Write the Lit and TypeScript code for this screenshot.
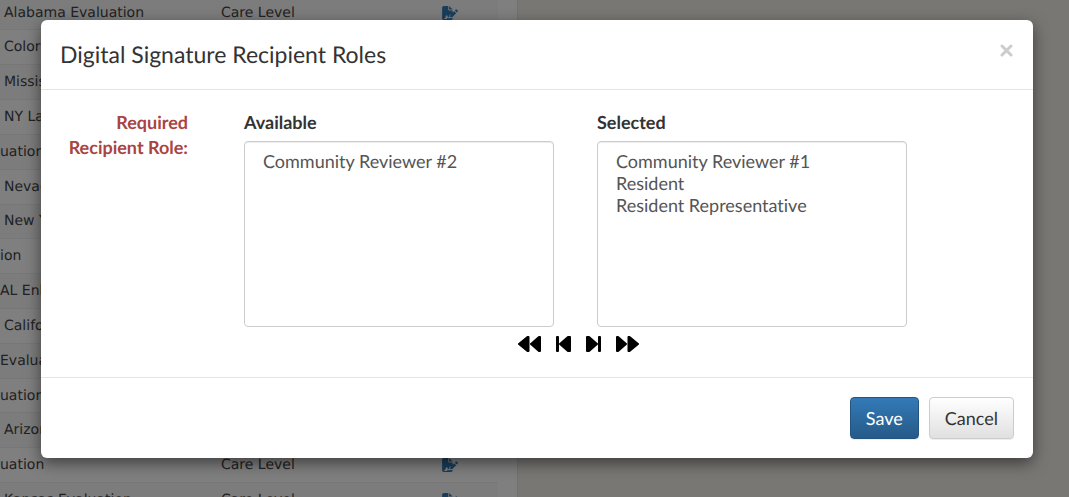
import { LitElement, html, css } from "lit";
import { customElement, property } from "lit/decorators.js";

interface Evaluation {
  name: string;
  level?: string;
  wrapped?: boolean;
}

const EVALUATIONS: Evaluation[] = [
  { name: "Alabama Evaluation", level: "Care Level" },
  { name: "Colorado" },
  { name: "Mississippi" },
  { name: "NY La" },
  { name: "uation", wrapped: true },
  { name: "Nevada" },
  { name: "New York" },
  { name: "ion", wrapped: true },
  { name: "AL Enh", wrapped: true },
  { name: "California" },
  { name: "Evaluation", wrapped: true },
  { name: "uation", wrapped: true },
  { name: "Arizona" },
  { name: "uation", level: "Care Level", wrapped: true },
  { name: "Kansas Evaluation", level: "Care Level" },
];

@customElement("evaluation-list")
export class EvaluationList extends LitElement {
  static styles = css`
    :host {
      display: block;
      overflow: hidden;
      background: #f2efe8;
    }
    .panel {
      box-sizing: border-box;
      width: 518px;
      padding-right: 19px;
      background: #fff;
      border-right: 1px solid #e4e2dc;
    }
    .table {
      width: 100%;
      height: 522px;
      margin-top: -4px;
      border-collapse: collapse;
      table-layout: fixed;
      font: 14px/20px "DejaVu Sans", sans-serif;
      color: #444;
    }
    .row {
      border-bottom: 1px solid #eee;
    }
    .row:nth-child(odd) {
      background: #f9f9f9;
    }
    .name {
      padding: 0 0 0 4px;
      white-space: nowrap;
    }
    .wrapped {
      padding-left: 0;
    }
    .level {
      width: 221px;
      padding: 0;
    }
    .action {
      width: 56px;
      padding: 0;
    }
    .sign {
      display: block;
      width: 16px;
      height: 14px;
      color: #337ab7;
    }
    .icon {
      display: block;
      width: 16px;
      height: 14px;
      fill: currentColor;
    }
  `;

  render() {
    return html`
      <div class="panel">
        <table class="table">
          <tbody>
            ${EVALUATIONS.map(
              (e) => html`<tr class="row">
                <td class="name ${e.wrapped ? "wrapped" : ""}">${e.name}</td>
                <td class="level">${e.level ?? ""}</td>
                <td class="action">
                  ${e.level
                    ? html`<a class="sign" href="#" aria-label="Edit signature roles">
                        <svg class="icon" viewBox="0 0 576 512" aria-hidden="true">
                          <path
                            d="M64 0C28.700 0 0 28.700 0 64v384c0 35.300 28.700 64 64 64h256c35.300 0 64-28.700 64-64v-19.200l-60 15c-10 3-22-1-30-8-8 8-18 12-30 12h-40c-8 0-16-5-20-13l-8-17-11 36c-4 12-14 20-27 20H80v-32h30l24-80c8-28 46-30 58-4l24 52 40-2 17-66c3-11 9-21 17-29L384 284V160H256c-18 0-32-14-32-32V0zM256 0v128h128zM550 139c-16-16-41-16-57 0l-29 29 71 71 29-29c16-16 16-41 0-57zM312 320c-4 4-7 9-8 15l-15 60c-3 11 8 22 19 19l60-15c6-1 11-4 15-8l130-130-71-71z"
                          />
                        </svg>
                      </a>`
                    : ""}
                </td>
              </tr>`,
            )}
          </tbody>
        </table>
      </div>
    `;
  }
}

@customElement("role-picker")
export class RolePicker extends LitElement {
  @property({ attribute: false }) available: string[] = [];
  @property({ attribute: false }) selected: string[] = [];

  static styles = css`
    :host {
      display: block;
    }
    .lists {
      display: grid;
      grid-template-columns: 1fr 1fr;
      column-gap: 43px;
    }
    .heading {
      display: block;
      font-weight: 700;
      line-height: 25px;
      color: #333;
      margin-bottom: 6px;
    }
    .list {
      box-sizing: border-box;
      display: block;
      width: 100%;
      height: 186px;
      padding: 8px 16px;
      border: 1px solid #ccc;
      border-radius: 4px;
      box-shadow: inset 0 1px 1px rgba(0, 0, 0, 0.075);
      background: #fff;
      font: inherit;
      text-rendering: inherit;
      color: #555;
      outline: none;
      overflow: auto;
    }
    .option {
      padding: 0 2px;
      min-height: 0;
      line-height: 22px;
    }
    .moves {
      display: flex;
      justify-content: center;
      gap: 15px;
      padding: 8px 0 0 6px;
    }
    .move {
      display: block;
      padding: 0;
      border: 0;
      background: none;
      color: #000;
    }
    .glyph {
      display: block;
      height: 18px;
      fill: currentColor;
      stroke: currentColor;
      stroke-width: 2;
      stroke-linejoin: round;
    }
  `;

  private list(id: string, title: string, roles: string[]) {
    return html`<div>
      <label class="heading" for=${id}>${title}</label>
      <select class="list" id=${id} multiple>
        ${roles.map((r) => html`<option class="option">${r}</option>`)}
      </select>
    </div>`;
  }

  render() {
    return html`
      <div class="lists">
        ${this.list("available", "Available", this.available)}
        ${this.list("selected", "Selected", this.selected)}
      </div>
      <div class="moves">
        <button class="move" type="button" aria-label="Remove all">
          <svg class="glyph" width="23" viewBox="0 0 23 18">
            <path d="M1 9 9.500 2h1v14h-1zM13 9l8-7h1v14h-1z" />
          </svg>
        </button>
        <button class="move" type="button" aria-label="Remove">
          <svg class="glyph" width="15" viewBox="0 0 15 18">
            <path d="M1 2h1v14H1zM4 9l8-7h2v14h-2z" />
          </svg>
        </button>
        <button class="move" type="button" aria-label="Add">
          <svg class="glyph" width="15" viewBox="0 0 15 18">
            <path d="M13 2h1v14h-1zM11 9 3 2H1v14h2z" />
          </svg>
        </button>
        <button class="move" type="button" aria-label="Add all">
          <svg class="glyph" width="23" viewBox="0 0 23 18">
            <path d="M10 9 2 2H1v14h1zM22 9l-8.500-7h-1v14h1z" />
          </svg>
        </button>
      </div>
    `;
  }
}

@customElement("app-root")
export class AppRoot extends LitElement {
  static styles = css`
    :host {
      display: block;
      position: relative;
      height: 100vh;
      overflow: hidden;
      font: 18px/25px Lato, sans-serif;
      font-variant-ligatures: none;
      text-rendering: geometricPrecision;
      color: #333;
    }
    .page {
      height: 100%;
    }
    .backdrop {
      position: absolute;
      inset: 0;
      background: rgba(0, 0, 0, 0.5);
    }
    .dialog {
      margin: 20px 36px 20px 41px;
      background: #fff;
      border-radius: 6px;
      box-shadow: 0 5px 15px rgba(0, 0, 0, 0.5);
    }
    .header {
      display: flex;
      justify-content: space-between;
      align-items: flex-start;
      padding: 19px;
      border-bottom: 1px solid #e5e5e5;
    }
    .title {
      margin: 0;
      font-size: 23px;
      line-height: 31px;
      font-weight: 400;
    }
    .close {
      padding: 5px 0 0;
      border: 0;
      background: none;
      color: #ccc;
    }
    .cross {
      display: block;
      width: 14px;
      height: 13px;
      fill: none;
      stroke: currentColor;
      stroke-width: 3;
      stroke-linecap: round;
    }
    .body {
      display: grid;
      grid-template-columns: 128px 1fr;
      column-gap: 56px;
      padding: 20px 126px 24px 19px;
    }
    .label {
      font-weight: 700;
      text-align: right;
      color: #a94442;
    }
    .footer {
      display: flex;
      justify-content: flex-end;
      gap: 10px;
      padding: 19px;
      border-top: 1px solid #e5e5e5;
    }
    .button {
      padding: 8px 15px;
      border: 1px solid #ccc;
      border-radius: 4px;
      background: linear-gradient(#fff, #e0e0e0);
      box-shadow: 0 1px 1px rgba(0, 0, 0, 0.075);
      font: inherit;
      line-height: 24px;
      text-rendering: inherit;
      color: #333;
    }
    .primary {
      border-color: #245580;
      background: linear-gradient(#337ab7, #265a88);
      color: #fff;
    }
  `;

  render() {
    return html`
      <evaluation-list class="page"></evaluation-list>
      <div class="backdrop">
        <section class="dialog" role="dialog" aria-modal="true" aria-labelledby="title">
          <header class="header">
            <h4 class="title" id="title">Digital Signature Recipient Roles</h4>
            <button class="close" type="button" aria-label="Close">
              <svg class="cross" viewBox="0 0 14 13"><path d="M2 2l9 9M11 2l-9 9" /></svg>
            </button>
          </header>
          <div class="body">
            <div class="label">Required Recipient Role:</div>
            <role-picker
              .available=${["Community Reviewer #2"]}
              .selected=${["Community Reviewer #1", "Resident", "Resident Representative"]}
            ></role-picker>
          </div>
          <footer class="footer">
            <button class="button primary" type="button">Save</button>
            <button class="button" type="button">Cancel</button>
          </footer>
        </section>
      </div>
    `;
  }
}
